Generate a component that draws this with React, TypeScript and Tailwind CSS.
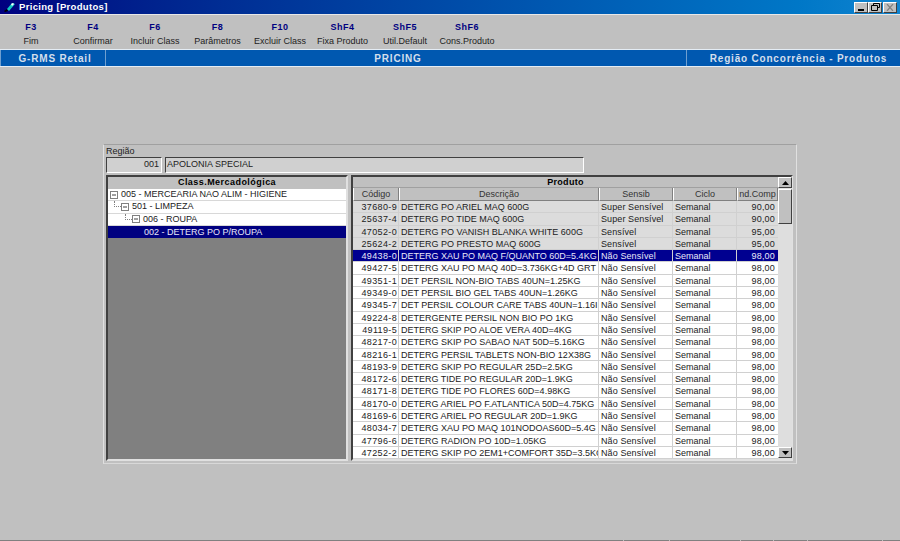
const FONT = "font-['Liberation_Sans',Arial,sans-serif]";

const keys = [
  { k: "F3", label: "Fim", w: "w-[62px]" },
  { k: "F4", label: "Confirmar", w: "w-[62px]" },
  { k: "F6", label: "Incluir Class", w: "w-[62px]" },
  { k: "F8", label: "Parâmetros", w: "w-[63px]" },
  { k: "F10", label: "Excluir Class", w: "w-[62px]" },
  { k: "ShF4", label: "Fixa Produto", w: "w-[63px]" },
  { k: "ShF5", label: "Util.Default", w: "w-[62px]" },
  { k: "ShF6", label: "Cons.Produto", w: "w-[62px]" },
];

const tree = [
  { label: "005 - MERCEARIA NAO ALIM - HIGIENE", level: 0 },
  { label: "501 - LIMPEZA", level: 1 },
  { label: "006 - ROUPA", level: 2 },
];

const rows: [string, string, string, string][] = [
  ["37680-9", "DETERG PO ARIEL MAQ 600G", "Super Sensível", "90,00"],
  ["25637-4", "DETERG PO TIDE MAQ 600G", "Super Sensível", "90,00"],
  ["47052-0", "DETERG PO VANISH BLANKA WHITE 600G", "Sensível", "95,00"],
  ["25624-2", "DETERG PO PRESTO MAQ 600G", "Sensível", "95,00"],
  ["49438-0", "DETERG XAU PO MAQ F/QUANTO 60D=5.4KG", "Não Sensível", "98,00"],
  ["49427-5", "DETERG XAU PO MAQ 40D=3.736KG+4D GRT", "Não Sensível", "98,00"],
  ["49351-1", "DET PERSIL NON-BIO TABS 40UN=1.25KG", "Não Sensível", "98,00"],
  ["49349-0", "DET PERSIL BIO GEL TABS 40UN=1.26KG", "Não Sensível", "98,00"],
  ["49345-7", "DET PERSIL COLOUR CARE TABS 40UN=1.16I", "Não Sensível", "98,00"],
  ["49224-8", "DETERGENTE PERSIL NON BIO PO 1KG", "Não Sensível", "98,00"],
  ["49119-5", "DETERG SKIP PO ALOE VERA 40D=4KG", "Não Sensível", "98,00"],
  ["48217-0", "DETERG SKIP PO SABAO NAT 50D=5.16KG", "Não Sensível", "98,00"],
  ["48216-1", "DETERG PERSIL TABLETS NON-BIO 12X38G", "Não Sensível", "98,00"],
  ["48193-9", "DETERG SKIP PO REGULAR 25D=2.5KG", "Não Sensível", "98,00"],
  ["48172-6", "DETERG TIDE PO REGULAR 20D=1.9KG", "Não Sensível", "98,00"],
  ["48171-8", "DETERG TIDE PO FLORES 60D=4.98KG", "Não Sensível", "98,00"],
  ["48170-0", "DETERG ARIEL PO F.ATLANTICA 50D=4.75KG", "Não Sensível", "98,00"],
  ["48169-6", "DETERG ARIEL PO REGULAR 20D=1.9KG", "Não Sensível", "98,00"],
  ["48034-7", "DETERG XAU PO MAQ 101NODOAS60D=5.4G", "Não Sensível", "98,00"],
  ["47796-6", "DETERG RADION PO 10D=1.05KG", "Não Sensível", "98,00"],
  ["47252-2", "DETERG SKIP PO 2EM1+COMFORT 35D=3.5KC", "Não Sensível", "98,00"],
];

const statusSegments = ["w-[623px]", "w-[45px]", "w-[70px]", "w-[32px]", "w-[33px]", "w-[74px]", "w-[17px]"];

const raised = "border border-t-white border-l-white border-r-[#404040] border-b-[#404040] bg-[#c0c0c0]";
const colGrid = "grid grid-cols-[46px_200px_74px_64px_41px]";

function WinBtn({ children }: { children: React.ReactNode }) {
  return <div className={`flex h-[11px] w-[14px] items-center justify-center ${raised}`}>{children}</div>;
}

function Expander() {
  return (
    <svg width="8" height="8" viewBox="0 0 8 8" className="mr-[3px] shrink-0">
      <rect x="0.5" y="0.5" width="7" height="7" fill="#fff" stroke="#808080" />
      <path d="M2 4h4" stroke="#404040" />
    </svg>
  );
}

function Arrow({ down }: { down?: boolean }) {
  return (
    <div className={`flex h-[11px] w-[14px] items-center justify-center ${raised}`}>
      <svg width="7" height="4" viewBox="0 0 7 4">
        <path d={down ? "M0 0h7L3.5 4z" : "M0 4h7L3.5 0z"} fill="#000" />
      </svg>
    </div>
  );
}

export default function App() {
  return (
    <div className={`${FONT} flex h-[541px] w-[900px] flex-col overflow-hidden bg-[#c0c0c0] text-[9px] leading-none text-[#222]`}>
      {/* title bar */}
      <div className="flex h-[14px] items-center bg-gradient-to-r from-[#000080] to-[#1084d0] pl-[3px] pr-[3px]">
        <svg width="13" height="11" viewBox="0 0 13 11" className="mr-[3px]">
          <path d="M1 9l3-2 1 2-3 1z" fill="#000" />
          <path d="M4 7l5-6 3 1-6 7z" fill="#10c8c0" />
          <path d="M8 2l2-1 1 1-2 2z" fill="#fff" />
        </svg>
        <span className="text-[9.5px] font-bold tracking-[0.32px] text-white">Pricing [Produtos]</span>
        <div className="ml-auto flex">
          <WinBtn>
            <div className="mt-[5px] h-[2px] w-[6px] bg-black" />
          </WinBtn>
          <WinBtn>
            <svg width="9" height="8" viewBox="0 0 9 8">
              <path d="M2.5 2V.5h6v4H7M.5 2.5h6v5h-6z" fill="none" stroke="#000" />
            </svg>
          </WinBtn>
          <div className="ml-[1px]">
            <WinBtn>
              <svg width="8" height="7" viewBox="0 0 8 7">
                <path d="M1 0l6 7M7 0L1 7" stroke="#808080" strokeWidth="1.2" />
              </svg>
            </WinBtn>
          </div>
        </div>
      </div>

      {/* function keys */}
      <div className="flex h-[35px] items-start border-t border-[#e8e8e8] pt-[8px]">
        {keys.map((key) => (
          <div key={key.k} className={`${key.w} flex shrink-0 flex-col items-center`}>
            <span className="text-[9px] font-bold tracking-[0.5px] text-[#000080]">{key.k}</span>
            <span className="mt-[5px] whitespace-nowrap text-[9px] text-[#222]">{key.label}</span>
          </div>
        ))}
      </div>

      {/* module bar */}
      <div className="grid h-[18px] grid-cols-[106px_580px_214px] border-t border-b border-[#e4ecf4] bg-[#0058b0] text-[10px] font-bold tracking-[0.8px] text-[#d4dfec]">
        <div className="flex items-center justify-center border-x border-[#6f9fd0] pl-[4px] pt-[1px]">G-RMS Retail</div>
        <div className="flex items-center justify-center pl-[4px] pt-[1px]">PRICING</div>
        <div className="flex items-center justify-center border-l border-[#6f9fd0] pl-[10px] pt-[1px]">Região Concorrência - Produtos</div>
      </div>

      {/* main panel */}
      <div className="ml-[103px] mt-[77px] flex h-[320px] w-[694px] flex-col border border-t-[#a0a0a0] border-l-[#e0e0e0] border-r-[#e0e0e0] border-b-[#d8d8d8] bg-[#c0c0c0] pl-[2px] pr-[3px]">
        <div className="pt-[2px] text-[9px] text-[#222]">Região</div>
        <div className="mt-[1px] flex gap-[3px]">
          <div className="flex h-[16px] w-[56px] items-center justify-end border border-t-[#404040] border-l-[#404040] border-r-white border-b-white bg-[#d0d0d0] pb-[1px] pr-[2px]">001</div>
          <div className="flex h-[16px] w-[419px] items-center border border-t-[#404040] border-l-[#404040] border-r-white border-b-white bg-[#d0d0d0] pb-[1px] pl-[1px]">APOLONIA SPECIAL</div>
        </div>

        <div className="mt-[2px] flex h-[286px] gap-[3px]">
          {/* class tree */}
          <div className="flex w-[243px] flex-col border-2 border-t-[#404040] border-l-[#404040] border-r-[#e0e0e0] border-b-[#e0e0e0] bg-[#808080]">
            <div className="flex h-[12px] items-center justify-center bg-[#c0c0c0] pb-[1px] font-bold tracking-[0.45px] text-black">Class.Mercadológica</div>
            <div className="bg-white">
              {tree.map((t) => (
                <div key={t.label} className="flex h-[12.3px] items-center border-b border-[#d8d8d8]" style={{ paddingLeft: 2 + t.level * 11 }}>
                  {t.level > 0 && <div className="-ml-[7px] mb-[5px] h-[6px] w-[7px] shrink-0 border-b border-l border-dotted border-[#808080]" />}
                  <Expander />
                  <span className="whitespace-nowrap">{t.label}</span>
                </div>
              ))}
              <div className="flex h-[12.3px] items-center bg-[#000080] pl-[36px] text-[#e8e8f8]">002 - DETERG PO P/ROUPA</div>
            </div>
          </div>

          {/* products */}
          <div className="flex w-[442px] border-2 border-t-[#404040] border-l-[#404040] border-r-[#e0e0e0] border-b-[#e0e0e0] bg-[#c0c0c0]">
            <div className="w-[425px]">
              <div className="flex h-[11px] items-center justify-center border-b border-[#a0a0a0] font-bold tracking-[0.3px] text-black">Produto</div>
              <div className={`${colGrid} h-[13px] text-[#333]`}>
                {["Código", "Descrição", "Sensib", "Ciclo", "nd.Comp"].map((h) => (
                  <div key={h} className="flex items-center justify-center overflow-hidden whitespace-nowrap border-r border-b border-l border-r-[#808080] border-b-[#808080] border-l-white">{h}</div>
                ))}
              </div>
              {rows.map((r, i) => {
                const tone = i === 4 ? "bg-[#000090] text-[#e8e8f8]" : i < 4 ? "bg-[#dcdcdc] text-[#222]" : "bg-white text-[#222]";
                return (
                  <div key={r[0]} className={`${colGrid} h-[12.3px] ${tone}`}>
                    <div className="overflow-hidden border-r border-b border-[#d0d0d0] pr-[1px] text-right leading-[12px] tracking-[0.35px]">{r[0]}</div>
                    <div className="overflow-hidden whitespace-nowrap border-r border-b border-[#d0d0d0] pl-[2px] leading-[12px]">{r[1]}</div>
                    <div className="overflow-hidden whitespace-nowrap border-r border-b border-[#d0d0d0] pl-[2px] leading-[12px] tracking-[0.1px]">{r[2]}</div>
                    <div className="overflow-hidden whitespace-nowrap border-r border-b border-[#d0d0d0] pl-[2px] leading-[12px]">Semanal</div>
                    <div className="overflow-hidden border-b border-[#d0d0d0] pr-[3px] text-right leading-[12px] tracking-[0.2px]">{r[3]}</div>
                  </div>
                );
              })}
            </div>
            <div className="flex w-[14px] flex-col bg-[#dedede]">
              <Arrow />
              <div className={`mt-[1px] h-[35px] w-[14px] ${raised}`} />
              <div className="flex-1" />
              <Arrow down />
              <div className="h-[1px]" />
            </div>
          </div>
        </div>
      </div>

      {/* status bar edge */}
      <div className="mt-auto flex h-[1px] gap-[1px]">
        {statusSegments.map((w) => (
          <div key={w} className={`${w} bg-[#808080]`} />
        ))}
      </div>
    </div>
  );
}
